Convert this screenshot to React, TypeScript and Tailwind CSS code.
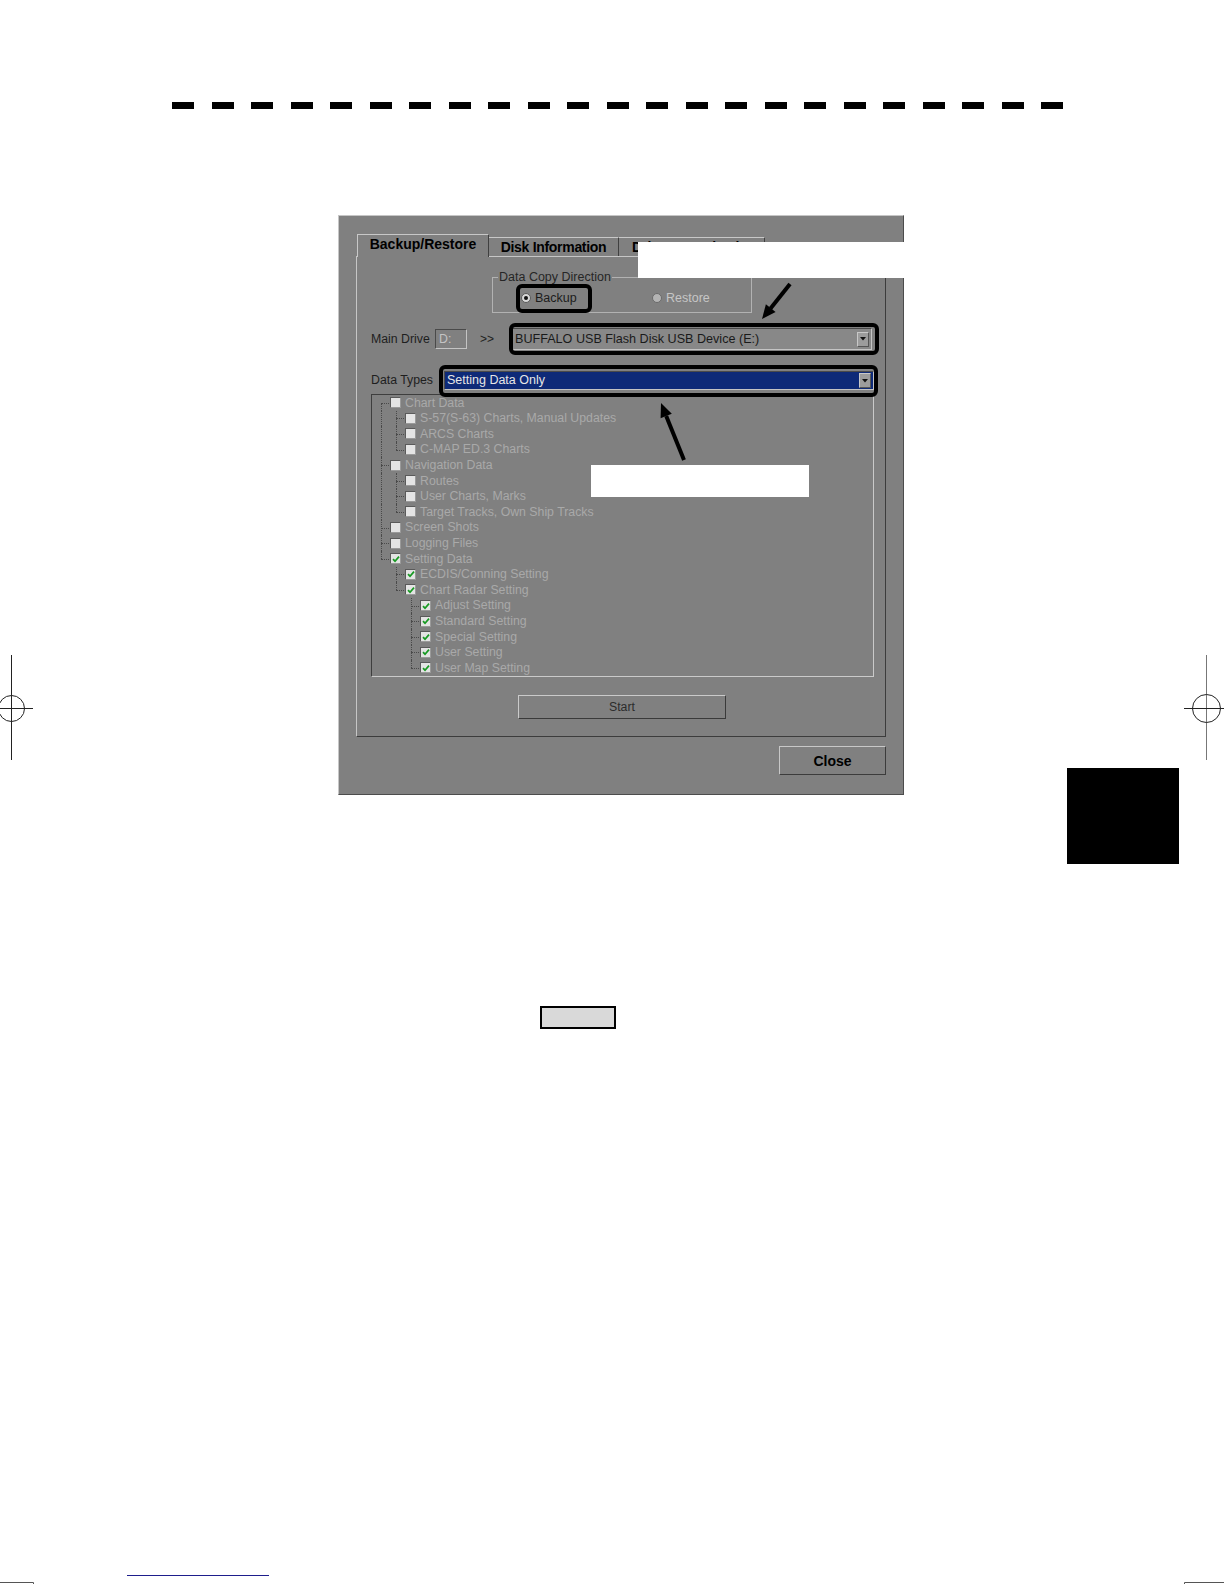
import React from "react";

type Item = { label: string; level: number; checked?: boolean };

const ITEMS: Item[] = [
  { label: "Chart Data", level: 0 },
  { label: "S-57(S-63) Charts, Manual Updates", level: 1 },
  { label: "ARCS Charts", level: 1 },
  { label: "C-MAP ED.3 Charts", level: 1 },
  { label: "Navigation Data", level: 0 },
  { label: "Routes", level: 1 },
  { label: "User Charts, Marks", level: 1 },
  { label: "Target Tracks, Own Ship Tracks", level: 1 },
  { label: "Screen Shots", level: 0 },
  { label: "Logging Files", level: 0 },
  { label: "Setting Data", level: 0, checked: true },
  { label: "ECDIS/Conning Setting", level: 1, checked: true },
  { label: "Chart Radar Setting", level: 1, checked: true },
  { label: "Adjust Setting", level: 2, checked: true },
  { label: "Standard Setting", level: 2, checked: true },
  { label: "Special Setting", level: 2, checked: true },
  { label: "User Setting", level: 2, checked: true },
  { label: "User Map Setting", level: 2, checked: true },
];

function isLast(i: number): boolean {
  const L = ITEMS[i].level;
  for (let j = i + 1; j < ITEMS.length; j++) {
    if (ITEMS[j].level < L) return true;
    if (ITEMS[j].level === L) return false;
  }
  return true;
}

function ancestorContinues(i: number, level: number): boolean {
  for (let j = i; j >= 0; j--) {
    if (ITEMS[j].level === level) return !isLast(j);
  }
  return false;
}

function Check({ checked }: { checked?: boolean }) {
  return (
    <span className="w-[11px] h-[11px] shrink-0 bg-[#e4e4e4] border border-t-[#5a5a5a] border-l-[#5a5a5a] border-r-[#9a9a9a] border-b-[#9a9a9a] flex items-center justify-center">
      {checked && (
        <svg width="8" height="8" viewBox="0 0 8 8">
          <path d="M1 4.2 L3 6.2 L7 1.6" stroke="#179a22" strokeWidth="1.7" fill="none" />
        </svg>
      )}
    </span>
  );
}

function TreeRow({ item, index }: { item: Item; index: number }) {
  const L = item.level;
  const last = isLast(index);
  const first = index === 0;
  const cells = [];
  for (let k = 0; k <= L; k++) {
    if (k < L) {
      cells.push(
        <div key={k} className="relative w-[15px] h-full shrink-0">
          {ancestorContinues(index, k) && (
            <span className="absolute left-[6px] top-0 bottom-0 border-l border-dotted border-[#4a4a4a]" />
          )}
        </div>
      );
    } else {
      cells.push(
        <div key={k} className="relative w-[15px] h-full shrink-0">
          <span
            className={
              first
                ? "absolute left-[6px] top-1/2 bottom-0 border-l border-dotted border-[#4a4a4a]"
                : last
                ? "absolute left-[6px] top-0 h-1/2 border-l border-dotted border-[#4a4a4a]"
                : "absolute left-[6px] top-0 bottom-0 border-l border-dotted border-[#4a4a4a]"
            }
          />
          <span className="absolute left-[6px] top-1/2 w-[8px] border-t border-dotted border-[#4a4a4a]" />
        </div>
      );
    }
  }
  return (
    <div className="flex items-center h-[15.6px]">
      <div className="w-[3px] h-full shrink-0" />
      {cells}
      <Check checked={item.checked} />
      <span className="ml-[4px] text-[12.3px] leading-none text-[#a9a9a9] whitespace-nowrap">{item.label}</span>
    </div>
  );
}

function DropButton() {
  return (
    <span className="ml-auto mr-[2px] w-[12px] h-[15px] shrink-0 bg-[#9c9c9c] border border-t-[#c8c8c8] border-l-[#c8c8c8] border-r-[#555] border-b-[#555] flex items-center justify-center">
      <svg width="6" height="4" viewBox="0 0 6 4">
        <path d="M0 0 L6 0 L3 3.5 Z" fill="#111" />
      </svg>
    </span>
  );
}

export default function App() {
  return (
    <div className="relative w-[1224px] h-[1584px] overflow-hidden bg-white font-['Liberation_Sans',Arial,sans-serif]">
      {/* dashed rule */}
      <div className="ml-[172px] pt-[102px] flex gap-[17.5px]">
        {Array.from({ length: 23 }).map((_, i) => (
          <div key={i} className="w-[22px] h-[7px] bg-black shrink-0" />
        ))}
      </div>

      {/* dialog screenshot */}
      <div className="ml-[338px] mt-[106px] w-[566px] h-[580px] bg-[#808080] border border-t-[#c6c6c6] border-l-[#c6c6c6] border-r-[#4c4c4c] border-b-[#4c4c4c] pt-[18px]">
        {/* tabs */}
        <div className="ml-[18px] flex items-end h-[22px]">
          <div className="relative z-10 -mb-px w-[132px] h-[23px] bg-[#808080] border-t border-l border-r border-t-[#c8c8c8] border-l-[#c8c8c8] border-r-[#404040] flex items-start justify-center pt-[1px]">
            <span className="text-[14px] font-bold text-black leading-[17px]">Backup/Restore</span>
          </div>
          <div className="w-[130px] h-[19px] bg-[#808080] border-t border-r border-t-[#c8c8c8] border-r-[#404040] flex items-center justify-center">
            <span className="text-[14px] font-bold text-black tracking-[-0.3px] leading-[17px] pt-[1px]">Disk Information</span>
          </div>
          <div className="w-[146px] h-[19px] bg-[#808080] border-t border-r border-t-[#c8c8c8] border-r-[#404040] flex items-center pl-[13px]">
            <span className="text-[14px] font-bold text-black leading-[17px] pt-[1px] whitespace-nowrap">Drive Organization</span>
          </div>
        </div>

        {/* tab panel */}
        <div className="ml-[17px] w-[530px] h-[481px] border border-t-[#c6c6c6] border-l-[#c6c6c6] border-r-[#3c3c3c] border-b-[#3c3c3c]">
          {/* group box */}
          <div className="relative ml-[135px] mt-[20px] w-[260px] h-[36px] border border-[#b2b2b2] flex items-center pt-[6px]">
            <span className="absolute left-[5px] -top-[8px] px-[1px] bg-[#808080] text-[12.5px] leading-[14px] text-[#262626] whitespace-nowrap">
              Data Copy Direction
            </span>
            <div className="ml-[28px] w-[131px] flex items-center">
              <span className="w-[10px] h-[10px] rounded-full bg-[#d8d8d8] border border-[#5a5a5a] flex items-center justify-center">
                <span className="w-[4px] h-[4px] rounded-full bg-[#111]" />
              </span>
              <span className="ml-[4px] text-[12.5px] leading-none text-[#1c1c1c]">Backup</span>
            </div>
            <div className="flex items-center">
              <span className="w-[10px] h-[10px] rounded-full bg-[#b4b4b4] border border-[#6a6a6a]" />
              <span className="ml-[4px] text-[12.5px] leading-none text-[#c6c6c6]">Restore</span>
            </div>
          </div>

          {/* main drive row */}
          <div className="mt-[15px] ml-[14px] h-[22px] flex items-center">
            <span className="w-[64px] text-[12.3px] leading-none text-[#1e1e1e] whitespace-nowrap">Main Drive</span>
            <span className="w-[32px] h-[20px] border border-t-[#4a4a4a] border-l-[#4a4a4a] border-r-[#c4c4c4] border-b-[#c4c4c4] flex items-center pl-[3px] text-[12.3px] leading-none text-[#c4c4c4]">
              D:
            </span>
            <span className="w-[44px] pl-[13px] text-[12px] leading-none text-[#1e1e1e]">&gt;&gt;</span>
            <div className="w-[361px] h-[22px] bg-[#888888] border border-t-[#4a4a4a] border-l-[#4a4a4a] border-r-[#c4c4c4] border-b-[#c4c4c4] flex items-center pl-[3px]">
              <span className="text-[12.6px] leading-none text-[#1a1a1a] whitespace-nowrap">BUFFALO USB Flash Disk USB Device (E:)</span>
              <DropButton />
            </div>
          </div>

          {/* data types row */}
          <div className="mt-[21px] ml-[14px] h-[19px] flex items-center">
            <span className="w-[73px] text-[12.3px] leading-none text-[#1e1e1e] whitespace-nowrap">Data Types</span>
            <div className="w-[430px] h-[19px] bg-[#0e2a78] border border-t-[#4a4a4a] border-l-[#4a4a4a] border-r-[#c4c4c4] border-b-[#c4c4c4] flex items-center pl-[2px]">
              <span className="text-[12.5px] leading-none text-[#e6e6e6] whitespace-nowrap">Setting Data Only</span>
              <DropButton />
            </div>
          </div>

          {/* tree */}
          <div className="mt-[4px] ml-[14px] w-[503px] h-[283px] border border-t-[#3e3e3e] border-l-[#3e3e3e] border-r-[#cacaca] border-b-[#cacaca] overflow-hidden">
            {ITEMS.map((it, i) => (
              <TreeRow key={i} item={it} index={i} />
            ))}
          </div>

          {/* start */}
          <button className="mt-[18px] ml-[161px] w-[208px] h-[24px] bg-[#808080] border border-t-[#cacaca] border-l-[#cacaca] border-r-[#3a3a3a] border-b-[#3a3a3a] flex items-center justify-center text-[12.3px] leading-none text-[#2c2c2c]">
            Start
          </button>
        </div>

        {/* close */}
        <div className="ml-[17px] w-[530px] mt-[9px] flex justify-end">
          <button className="w-[107px] h-[29px] bg-[#808080] border border-t-[#c8c8c8] border-l-[#c8c8c8] border-r-[#3c3c3c] border-b-[#3c3c3c] flex items-center justify-center text-[14px] font-bold leading-none text-black">
            Close
          </button>
        </div>
      </div>

      {/* small key button */}
      <div className="ml-[540px] mt-[211px] w-[76px] h-[23px] bg-[#d9d9d9] border-2 border-black" />

      {/* annotation frames */}
      <div className="absolute left-[516px] top-[284px] w-[76px] h-[29px] border-[4px] border-black rounded-[6px]" />
      <div className="absolute left-[509px] top-[323px] w-[370px] h-[32px] border-[4px] border-black rounded-[6px]" />
      <div className="absolute left-[439px] top-[365px] w-[439px] h-[32px] border-[4px] border-black rounded-[6px]" />

      {/* white callout blanks */}
      <div className="absolute left-[638px] top-[242px] w-[267px] h-[36px] bg-white" />
      <div className="absolute left-[591px] top-[465px] w-[218px] h-[32px] bg-white" />

      {/* chapter thumb tab */}
      <div className="absolute left-[1067px] top-[768px] w-[112px] h-[96px] bg-black" />

      {/* blue underline */}
      <div className="absolute left-[127px] top-[1575px] w-[142px] h-px bg-[#1e1e8c]" />

      {/* drawings: arrows, crop marks */}
      <svg className="absolute left-0 top-0 pointer-events-none" width="1224" height="1584" viewBox="0 0 1224 1584">
        <line x1="790" y1="284" x2="770.5" y2="308.5" stroke="#000" strokeWidth="4" />
        <polygon points="762,319 775.6,311.9 765.9,304.2" fill="#000" />
        <line x1="684" y1="460" x2="666.2" y2="416" stroke="#000" strokeWidth="4" />
        <polygon points="661,403 671.8,413.8 660.6,418.2" fill="#000" />

        <g stroke="#222" strokeWidth="1" fill="none">
          <line x1="11.5" y1="655" x2="11.5" y2="760" />
          <line x1="0" y1="708.5" x2="33" y2="708.5" />
          <circle cx="11.5" cy="708.5" r="13" />
          <line x1="1206.5" y1="655" x2="1206.5" y2="760" stroke="#777" />
          <line x1="1184" y1="708.5" x2="1224" y2="708.5" />
          <circle cx="1206.5" cy="708.5" r="14" />
          <polyline points="0,1582.5 33.5,1582.5 33.5,1584" stroke="#555" />
          <polyline points="1224,1582.5 1184.5,1582.5 1184.5,1584" stroke="#555" />
        </g>
      </svg>
    </div>
  );
}
